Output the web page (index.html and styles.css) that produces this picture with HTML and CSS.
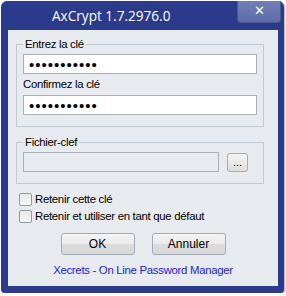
FILE: index.html
```html
<!DOCTYPE html>
<html>
<head>
   <meta charset="UTF-8">
   <title>AxCrypt</title>
   <link rel="stylesheet" href="styles.css">
</head>
<body>

<div class="window">
   <div class="titlebar">
       <span class="title">AxCrypt 1.7.2976.0</span>
       <a href="javascript:;" class="close">&#x2715;</a>
   </div>
   <div class="content">
       <fieldset class="group">
           <legend>Entrez la clé</legend>
           <input type="password" class="field" value="secretsecre">
           <label class="sublabel">Confirmez la clé</label>
           <input type="password" class="field" value="secretsecre">
       </fieldset>

       <fieldset class="group keyfile">
           <legend>Fichier-clef</legend>
           <div class="filerow">
               <input type="text" class="field disabled" disabled>
               <button class="browse">...</button>
           </div>
       </fieldset>

       <div class="checks">
           <label class="check"><span class="box"></span>Retenir cette clé</label>
           <label class="check"><span class="box"></span>Retenir et utiliser en tant que défaut</label>
       </div>

       <div class="buttons">
           <button class="btn">OK</button>
           <button class="btn">Annuler</button>
       </div>

       <a href="javascript:;" class="link">Xecrets - On Line Password Manager</a>
   </div>
</div>

</body>
</html>
```

FILE: styles.css
```css
* {
    margin: 0;
    padding: 0;
    box-sizing: border-box;
}

body {
    background: #fff;
    font-family: "Liberation Sans", Arial, sans-serif;
    font-size: 11.4px;
    letter-spacing: -0.3px;
    color: #000;
}

.window {
    margin: 1px 0 0 1px;
    width: 283px;
    height: 292px;
    background: #2b3a8b;
    border-radius: 6px 6px 4px 4px;
    padding: 0 6px 7px 7px;
    display: flex;
    flex-direction: column;
    box-shadow: 1px 1px 2px rgba(0, 0, 0, .35);
}

.titlebar {
    height: 29px;
    display: flex;
    align-items: flex-start;
}

.title {
    flex: 1;
    padding: 6px 0 0 44px;
    color: #fff;
    font-family: "Open Sans", "Liberation Sans", sans-serif;
    font-size: 13.6px;
    letter-spacing: 0;
    line-height: 18px;
}

.close {
    width: 44px;
    height: 22px;
    margin-right: -3px;
    background: linear-gradient(#717fb5, #5e6da9);
    border: 1px solid #4a5894;
    border-top: none;
    border-radius: 0 0 4px 4px;
    color: #fff;
    text-align: center;
    font-size: 13px;
    letter-spacing: 0;
    line-height: 20px;
    text-decoration: none;
}

.content {
    flex: 1;
    background: #e7eaee;
    padding: 7px 14px 0 8px;
    display: flex;
    flex-direction: column;
}

.group {
    border: 1px solid #bfcad4;
    padding: 3px 6px 11px 6px;
    min-width: 0;
}

.group legend {
    margin-left: 0;
    padding: 0 2px;
    line-height: 14px;
}

.keyfile {
    margin-top: 8px;
    padding-top: 3px;
}

.field {
    display: block;
    width: 234px;
    height: 20px;
    border: 1px solid #a7b0ba;
    background: #fff;
    padding: 0 5px;
    font-family: "Liberation Sans", Arial, sans-serif;
    font-size: 15px;
    letter-spacing: 1px;
    outline: none;
}

.sublabel {
    display: block;
    line-height: 15px;
    margin: 3px 0 3px 0;
}

.filerow {
    display: flex;
    align-items: center;
}

.field.disabled {
    width: 196px;
    background: #e7eaee;
}

.browse {
    margin-left: 8px;
    width: 21px;
    height: 19px;
    border: 1px solid #a3abb4;
    border-radius: 3px;
    background: linear-gradient(#f4f4f4, #dedede);
    font-family: "Liberation Sans", Arial, sans-serif;
    font-size: 11px;
    line-height: 12px;
    color: #000;
}

.checks {
    margin-top: 9px;
    padding-left: 3px;
    display: flex;
    flex-direction: column;
    gap: 4px;
}

.check {
    display: flex;
    align-items: center;
    line-height: 13px;
}

.check .box {
    width: 13px;
    height: 13px;
    margin-right: 3px;
    border: 1px solid #8f9aa6;
    border-radius: 2px;
    background: linear-gradient(#e6e8ea, #f6f6f6);
}

.buttons {
    margin-top: 10px;
    display: flex;
    justify-content: center;
    gap: 17px;
    padding-left: 6px;
}

.btn {
    width: 74px;
    height: 22px;
    border: 1px solid #a3abb4;
    border-radius: 3px;
    background: linear-gradient(#f4f4f4 0%, #ebebeb 50%, #dcdcdc 51%, #d8d8d8 100%);
    font-family: "Liberation Sans", Arial, sans-serif;
    font-size: 12px;
    color: #000;
}

.link {
    margin-top: 8px;
    padding-left: 6px;
    text-align: center;
    color: #2323d6;
    text-decoration: none;
    line-height: 14px;
}
```
